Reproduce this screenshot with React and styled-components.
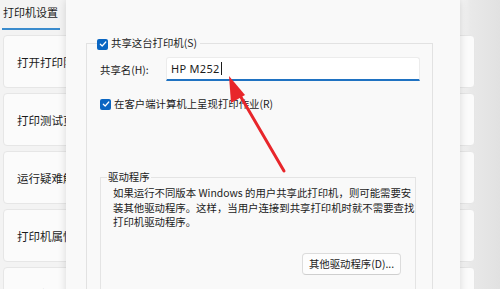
import React from 'react';
import styled, { createGlobalStyle } from 'styled-components';

const GlobalStyle = createGlobalStyle`
  html, body {
    margin: 0;
    padding: 0;
    width: 500px;
    height: 289px;
    overflow: hidden;
  }
  body {
    font-family: "Noto Sans CJK SC", "Noto Sans", sans-serif;
    color: #1b1b1b;
  }
`;

const sideItems = ['打开打印队列', '打印测试页', '运行疑难解答', '打印机属性', '打印首选项'];

function CheckMark() {
  return (
    <svg width='8' height='8' viewBox='0 0 8 8' fill='none'>
      <path d='M1.3 4.2 L3.2 6 L6.8 2' stroke='#fff' strokeWidth='1.2' strokeLinecap='round' strokeLinejoin='round' />
    </svg>
  );
}

function App() {
  return (
    <>
      <GlobalStyle />
      <Desktop>
        <SettingsPage>
          <TabHeader>
            <TabLabel>打印机设置</TabLabel>
          </TabHeader>
          <CardList>
            {sideItems.map((item) => (
              <Card key={item}>{item}</Card>
            ))}
          </CardList>
        </SettingsPage>

        <Dialog>
          <Group>
            <GroupLegend>
              <Check>
                <CheckMark />
              </Check>
              共享这台打印机(S)
            </GroupLegend>
            <NameRow>
              <FieldLabel>共享名(H):</FieldLabel>
              <Field>
                HP M252
                <Caret />
              </Field>
            </NameRow>
            <CheckRow>
              <Check>
                <CheckMark />
              </Check>
              在客户端计算机上呈现打印作业(R)
            </CheckRow>
            <DriverGroup>
              <DriverLegend>驱动程序</DriverLegend>
              <Description>
                <span>如果运行不同版本 Windows 的用户共享此打印机，则可能需要安</span>
                <span>装其他驱动程序。这样，当用户连接到共享打印机时就不需要查找</span>
                <span>打印机驱动程序。</span>
              </Description>
              <ButtonRow>
                <Button>其他驱动程序(D)...</Button>
              </ButtonRow>
            </DriverGroup>
          </Group>
        </Dialog>

        <Arrow width='500' height='289' viewBox='0 0 500 289'>
          <line x1='284' y1='171' x2='238' y2='92' stroke='#e8262b' strokeWidth='3' strokeLinecap='round' />
          <polygon points='229,76 245,95 231,103' fill='#e8262b' />
        </Arrow>
      </Desktop>
    </>
  );
}

const Desktop = styled.div`
  position: relative;
  width: 500px;
  height: 289px;
  overflow: hidden;
`;

const SettingsPage = styled.div`
  width: 100%;
  height: 100%;
  padding: 0 0 0 2px;
  box-sizing: border-box;
  background: linear-gradient(
    to right,
    #f3f3f3 0,
    #f3f3f3 463px,
    #e9e9e9 470px,
    #e1e1e1 100%
  );
`;

const TabHeader = styled.div`
  width: 58px;
  height: 30px;
  box-sizing: border-box;
  border-bottom: 2px solid #3a8bcd;
  display: flex;
  align-items: flex-start;
`;

const TabLabel = styled.span`
  font-size: 11px;
  line-height: 14px;
  margin: 5px 0 0 1px;
  white-space: nowrap;
`;

const CardList = styled.div`
  margin-top: 5px;
  width: 473px;
  display: flex;
  flex-direction: column;
  gap: 5px;
`;

const Card = styled.div`
  height: 53px;
  margin-left: 1px;
  box-sizing: border-box;
  padding-left: 13px;
  display: flex;
  align-items: center;
  font-size: 11.5px;
  background: #fbfbfb;
  border: 1px solid #e6e6e6;
  border-radius: 4px;
`;

const Dialog = styled.div`
  position: absolute;
  left: 66px;
  top: 0;
  width: 394px;
  height: 310px;
  box-sizing: border-box;
  padding: 37px 27px 0 20px;
  background: #f9f9f9;
  box-shadow: 0 0 8px rgba(0, 0, 0, 0.14);
  font-size: 10.4px;
`;

const Group = styled.fieldset`
  margin: 0;
  padding: 2px 12px 0 13px;
  border: 1px solid #e2e2e2;
  border-bottom: none;
  min-width: 0;
  height: 300px;
`;

const GroupLegend = styled.legend`
  margin-left: -3px;
  padding: 0 3px 0 0;
  display: flex;
  align-items: center;
  gap: 3px;
  height: 12px;
  line-height: 12px;
  white-space: nowrap;
`;

const Check = styled.span`
  width: 11px;
  height: 11px;
  flex: none;
  border-radius: 2px;
  background: #0a66c2;
  display: inline-flex;
  align-items: center;
  justify-content: center;
  margin-top: 2px;
`;

const NameRow = styled.div`
  margin-top: 6px;
  display: flex;
  align-items: center;
`;

const FieldLabel = styled.span`
  width: 66px;
  flex: none;
  white-space: nowrap;
`;

const Field = styled.div`
  width: 254px;
  height: 24px;
  box-sizing: border-box;
  padding: 0 0 0 4px;
  display: flex;
  align-items: center;
  background: #ffffff;
  border: 1px solid #ececec;
  border-bottom: 2px solid #1f72c2;
  border-radius: 3px 3px 0 0;
  font-family: "Noto Sans", "Noto Sans CJK SC", sans-serif;
  font-size: 11px;
  letter-spacing: 0.3px;
`;

const Caret = styled.span`
  width: 1px;
  height: 13px;
  margin-left: 1px;
  background: #1b1b1b;
`;

const CheckRow = styled.div`
  margin-top: 16px;
  display: flex;
  align-items: center;
  gap: 3px;
  height: 12px;
  white-space: nowrap;
`;

const DriverGroup = styled.fieldset`
  margin: 62px 4px 0 0;
  padding: 0 10px 0 12px;
  border: 1px solid #e4e4e4;
  border-bottom: none;
  min-width: 0;
  height: 140px;
`;

const DriverLegend = styled.legend`
  margin-left: -6px;
  padding: 0 1px;
  height: 12px;
  line-height: 12px;
`;

const Description = styled.p`
  margin: 3px 0 0;
  line-height: 14.5px;
  display: flex;
  flex-direction: column;
  white-space: nowrap;
`;

const ButtonRow = styled.div`
  margin-top: 23px;
  padding-right: 4px;
  display: flex;
  justify-content: flex-end;
`;

const Button = styled.button`
  width: 99px;
  height: 22px;
  padding: 0;
  font-family: inherit;
  font-size: 10.4px;
  color: #1b1b1b;
  background: #fdfdfd;
  border: 1px solid #dcdcdc;
  border-bottom-color: #cfcfcf;
  border-radius: 4px;
`;

const Arrow = styled.svg`
  position: absolute;
  left: 0;
  top: 0;
  pointer-events: none;
`;

export default App;
